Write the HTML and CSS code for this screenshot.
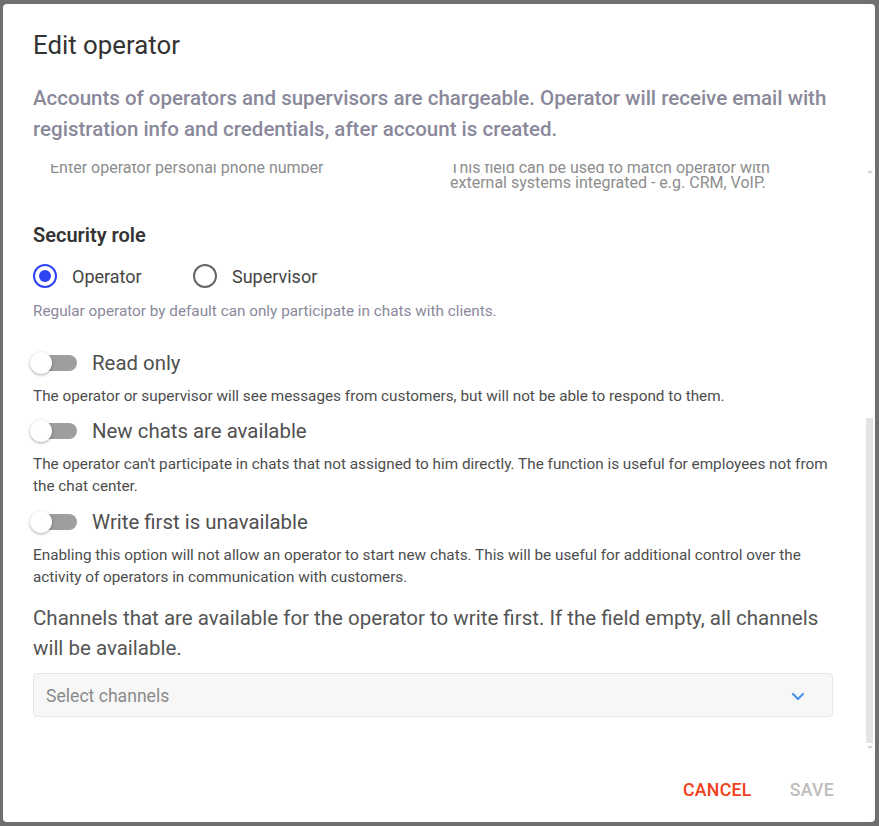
FILE: index.html
```html
<!DOCTYPE html>
<html lang="en">
<head>
<meta charset="utf-8">
<title>Edit operator</title>
<link rel="stylesheet" href="styles.css">
</head>
<body>
<div class="modal">
  <h1 class="title">Edit operator</h1>
  <p class="subtitle">Accounts of operators and supervisors are chargeable. Operator will receive email with registration info and credentials, after account is created.</p>
  <div class="body">
    <div class="content">
      <div class="hints">
        <div class="hint">Enter operator personal phone number</div>
        <div class="hint">This field can be used to match operator with external systems integrated - e.g. CRM, VoIP.</div>
      </div>
      <h2 class="section">Security role</h2>
      <div class="radios">
        <label class="radio"><span class="ring on"><span class="dot"></span></span>Operator</label>
        <label class="radio"><span class="ring"></span>Supervisor</label>
      </div>
      <p class="note">Regular operator by default can only participate in chats with clients.</p>

      <div class="toggle-row"><span class="switch"><span class="thumb"></span></span><span class="toggle-label">Read only</span></div>
      <p class="desc">The operator or supervisor will see messages from customers, but will not be able to respond to them.</p>

      <div class="toggle-row"><span class="switch"><span class="thumb"></span></span><span class="toggle-label">New chats are available</span></div>
      <p class="desc">The operator can't participate in chats that not assigned to him directly. The function is useful for employees not from the chat center.</p>

      <div class="toggle-row toggle-row--wide"><span class="switch"><span class="thumb"></span></span><span class="toggle-label">Write first is unavailable</span></div>
      <p class="desc">Enabling this option will not allow an operator to start new chats. This will be useful for additional control over the activity of operators in communication with customers.</p>

      <p class="channels">Channels that are available for the operator to write first. If the field empty, all channels will be available.</p>
      <div class="select">
        <span class="placeholder">Select channels</span>
        <svg class="chevron" width="14" height="9" viewBox="0 0 14 9"><polyline points="2,2 7,7 12,2" fill="none" stroke="#4b93ea" stroke-width="2.2" stroke-linecap="round" stroke-linejoin="round"/></svg>
      </div>
    </div>
    <div class="scrollbar">
      <span class="arrow up"></span>
      <span class="spacer"></span>
      <span class="sb-thumb"></span>
      <span class="arrow down"></span>
    </div>
  </div>
  <div class="footer">
    <button class="btn cancel">CANCEL</button>
    <button class="btn save">SAVE</button>
  </div>
</div>
</body>
</html>
```

FILE: styles.css
```css
* { box-sizing: border-box; }
html, body { margin: 0; padding: 0; }
body {
  background: #6f6f6f;
  font-family: Roboto, "Liberation Sans", sans-serif;
  width: 879px;
  height: 826px;
  overflow: hidden;
  padding: 4px 4px 4px 3px;
}
.modal {
  width: 872px;
  height: 818px;
  background: #fff;
  border-radius: 4px;
  display: flex;
  flex-direction: column;
  overflow: hidden;
}
.title {
  margin: 0;
  padding: 25px 30px 0 30px;
  font-size: 25.8px;
  line-height: 32px;
  font-weight: 400;
  color: #333;
}
.subtitle {
  margin: 22px 0 0 0;
  padding: 0 30px;
  font-size: 20.5px;
  line-height: 31px;
  font-weight: 500;
  color: #8a899b;
}
.body {
  margin-top: 19px;
  height: 591px;
  display: flex;
  overflow: hidden;
}
.content {
  flex: 1;
  padding: 0 33px 0 30px;
  margin-top: -4px;
}
.hints {
  display: grid;
  grid-template-columns: 1fr 1fr;
}
.hint {
  padding-left: 17px;
  padding-right: 40px;
  font-size: 16px;
  line-height: 15px;
  color: #8d8d8d;
}
.section {
  margin: 33px 0 0 0;
  font-size: 20px;
  line-height: 24px;
  font-weight: 600;
  color: #333;
}
.radios {
  margin-top: 17px;
  display: flex;
  gap: 0;
  height: 24px;
}
.radio {
  display: flex;
  align-items: center;
  font-size: 18px;
  color: #444;
  width: 160px;
}
.ring {
  width: 24px;
  height: 24px;
  border-radius: 50%;
  border: 2px solid #666;
  margin-right: 15px;
  display: flex;
  align-items: center;
  justify-content: center;
  flex: none;
}
.ring.on { border-color: #2e44f4; }
.dot {
  width: 12px;
  height: 12px;
  border-radius: 50%;
  background: #2e44f4;
}
.note {
  margin: 13px 0 0 0;
  font-size: 15.3px;
  line-height: 20px;
  color: #8a899b;
}
.toggle-row {
  display: flex;
  align-items: center;
  height: 28px;
  margin-top: 10px;
}
.toggle-row--wide { margin-top: 11px; }
.note + .toggle-row { margin-top: 28px; }
.switch {
  width: 44px;
  height: 16px;
  border-radius: 8px;
  background: #9e9e9e;
  display: flex;
  align-items: center;
  margin: 0 15px 0 0;
  flex: none;
}
.thumb {
  width: 22px;
  height: 22px;
  border-radius: 50%;
  background: #fff;
  box-shadow: 0 1px 3px rgba(0,0,0,0.35);
  margin-left: -3px;
}
.toggle-label {
  font-size: 20.4px;
  line-height: 28px;
  color: #505050;
}
.desc {
  margin: 8px 0 0 0;
  font-size: 15.3px;
  line-height: 22px;
  color: #4d4d4d;
}
.channels {
  margin: 15px 0 0 0;
  font-size: 20.5px;
  line-height: 30px;
  color: #555;
}
.select {
  margin-top: 10px;
  height: 44px;
  background: #f7f7f7;
  border: 1px solid #e6e6e6;
  border-radius: 4px;
  display: flex;
  align-items: center;
  justify-content: space-between;
  padding: 2px 27px 0 12px;
}
.placeholder {
  font-size: 17.6px;
  color: #8a8a8a;
}
.scrollbar {
  width: 7px;
  margin-right: 2px;
  display: flex;
  flex-direction: column;
  align-items: center;
}
.arrow {
  width: 0;
  height: 0;
  border-left: 3px solid transparent;
  border-right: 3px solid transparent;
}
.arrow.up {
  margin-top: 6px;
  border-bottom: 3px solid #cfcfcf;
  margin-bottom: 4px;
}
.spacer { flex: 1; }
.sb-thumb {
  width: 7px;
  height: 325px;
  background: #e4e4e4;
}
.arrow.down {
  margin-top: 3px;
  border-top: 3px solid #cfcfcf;
  margin-bottom: 6px;
}
.footer {
  flex: 1;
  display: flex;
  justify-content: flex-end;
  align-items: center;
  padding: 2px 41px 0 0;
  gap: 38px;
}
.btn {
  border: 0;
  background: none;
  padding: 0;
  font-family: Roboto, "Liberation Sans", sans-serif;
  font-size: 17.7px;
  font-weight: 500;
  letter-spacing: 0.3px;
}
.cancel { color: #f2401b; }
.save { color: #bdbdbd; }
```
